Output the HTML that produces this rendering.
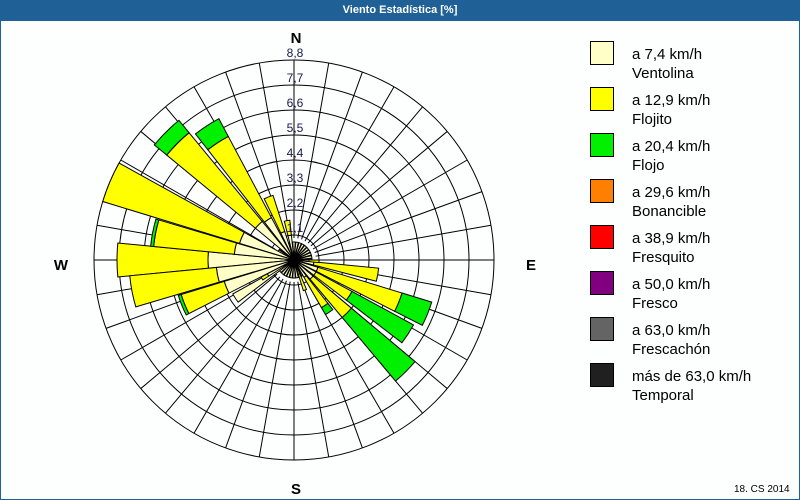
<!DOCTYPE html>
<html><head><meta charset="utf-8"><style>
html,body{margin:0;padding:0}
body{width:800px;height:500px;position:relative;background:#fdfefe;font-family:"Liberation Sans",sans-serif;overflow:hidden}
#frame{position:absolute;left:0;top:0;width:798px;height:498px;border:1px solid #1f6096}
#title{position:absolute;left:0;top:0;width:800px;height:21px;background:#1f6096;color:#fff;font-size:11px;font-weight:bold;text-align:center;line-height:21px}
.lg{position:absolute;left:590px;width:22px;height:22px;border:1px solid #000}
.lt{position:absolute;left:632px;font-size:15px;line-height:19px;color:#000}
</style></head><body>
<div id="frame"></div>
<div id="title">Viento Estadística [%]</div>
<svg id="s" width="800" height="500" style="position:absolute;left:0;top:0" xmlns="http://www.w3.org/2000/svg"></svg>
<div class="lg" style="top:41px;background:#ffffc8"></div><div class="lt" style="top:45px">a 7,4 km/h<br>Ventolina</div>
<div class="lg" style="top:87px;background:#ffff00"></div><div class="lt" style="top:91px">a 12,9 km/h<br>Flojito</div>
<div class="lg" style="top:133px;background:#00f000"></div><div class="lt" style="top:137px">a 20,4 km/h<br>Flojo</div>
<div class="lg" style="top:179px;background:#ff8000"></div><div class="lt" style="top:183px">a 29,6 km/h<br>Bonancible</div>
<div class="lg" style="top:225px;background:#ff0000"></div><div class="lt" style="top:229px">a 38,9 km/h<br>Fresquito</div>
<div class="lg" style="top:271px;background:#800080"></div><div class="lt" style="top:275px">a 50,0 km/h<br>Fresco</div>
<div class="lg" style="top:317px;background:#646464"></div><div class="lt" style="top:321px">a 63,0 km/h<br>Frescachón</div>
<div class="lg" style="top:363px;background:#202020"></div><div class="lt" style="top:367px">más de 63,0 km/h<br>Temporal</div>
<div style="position:absolute;left:734px;top:484px;font-size:10px">18. CS 2014</div>
<script>
var s=document.getElementById('s'),cx=294,cy=260,h='';
function P(r,a){a=a*Math.PI/180;return (cx+r*Math.sin(a)).toFixed(2)+','+(cy-r*Math.cos(a)).toFixed(2);}
for(var k=1;k<=8;k++)h+='<circle cx="'+cx+'" cy="'+cy+'" r="'+(25*k)+'" fill="none" stroke="#000" stroke-width="1"/>';
for(var a=0;a<360;a+=10){var p=P(200,a).split(','),q=P(22,a).split(',');h+='<line x1="'+q[0]+'" y1="'+q[1]+'" x2="'+p[0]+'" y2="'+p[1]+'" stroke="#000" stroke-width="1"/>';}
function W(a,w,r0,r1,c){var a0=a-w/2,a1=a+w/2;
 return '<path d="M'+P(r0,a0)+' L'+P(r1,a0)+' A'+r1+','+r1+' 0 0 1 '+P(r1,a1)+' L'+P(r0,a1)+(r0>0?' A'+r0+','+r0+' 0 0 0 '+P(r0,a0):'')+' Z" fill="'+c+'" stroke="#000" stroke-width="1"/>';}
var LY='#ffffc8',Y='#ffff00',G='#00f000';
var bars=[[293,12,[57,200],[]],[315,11,[50,165],[181]],[327,10,[48,140],[160]],[338,8,[30,68],[]],[350,8,[25,40],[]],
[270,11,[86,177],[]],[281,11,[60,141],[144]],[259,11,[78,165],[]],[248,10,[73,118],[121]],[237,8,[70,70],[]],[240,5,[30,37],[]],
[100,9,[20,85],[]],[93,6,[15,25],[]],[112,10,[25,113],[144]],[123,9,[25,66],[136]],[135,10,[25,75],[158]],[146,8,[20,55],[63]],[160,6,[15,32],[]]];
for(var a=0;a<360;a+=10)h+=W(a,8,0,18,LY);
bars.forEach(function(b){var a=b[0],w=b[1],ly=b[2][0],y=b[2][1];
 h+=W(a,w,0,ly,LY); if(y>ly)h+=W(a,w,ly,y,Y); if(b[3].length)h+=W(a,w,y,b[3][0],G);});
var labs=['1,1','2,2','3,3','4,4','5,5','6,6','7,7','8,8'];
for(var k=1;k<=8;k++)h+='<text x="'+(cx+1)+'" y="'+(cy-25*k-3)+'" font-size="12" fill="#1a1a50" text-anchor="middle" font-family="Liberation Sans, sans-serif">'+labs[k-1]+'</text>';
h+='<text x="296" y="43" font-size="15" font-weight="bold" text-anchor="middle" font-family="Liberation Sans, sans-serif">N</text>';
h+='<text x="61" y="270" font-size="15" font-weight="bold" text-anchor="middle" font-family="Liberation Sans, sans-serif">W</text>';
h+='<text x="531" y="270" font-size="15" font-weight="bold" text-anchor="middle" font-family="Liberation Sans, sans-serif">E</text>';
h+='<text x="296" y="494" font-size="15" font-weight="bold" text-anchor="middle" font-family="Liberation Sans, sans-serif">S</text>';
s.innerHTML=h;
</script>
</body></html>
